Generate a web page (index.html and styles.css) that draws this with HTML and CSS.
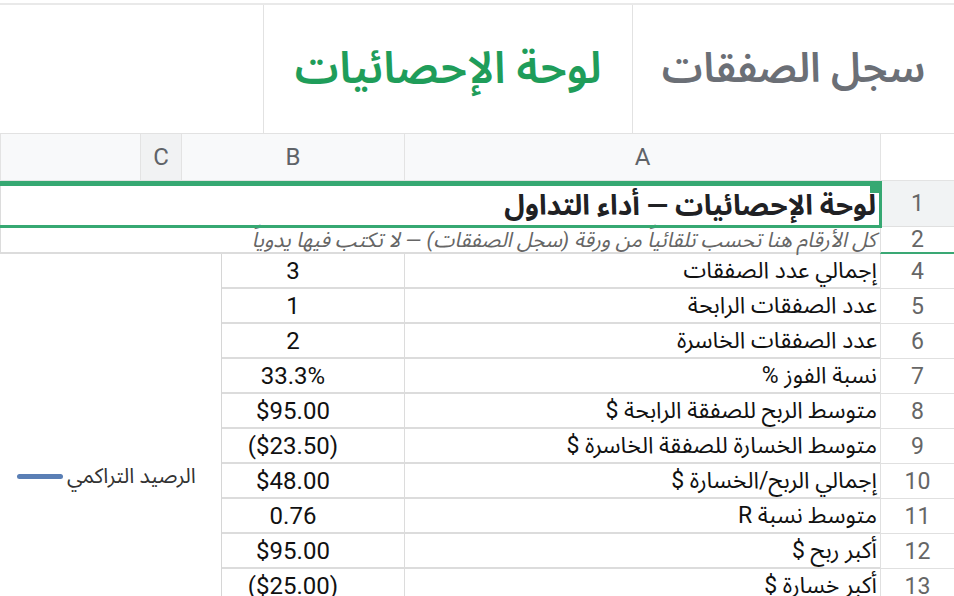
FILE: index.html
```html
<!DOCTYPE html>
<html lang="ar" dir="rtl">
<head>
  <meta charset="UTF-8">
  <title>لوحة الإحصائيات</title>
  <meta name="viewport" content="width=device-width, initial-scale=1.0" />
  <link rel="stylesheet" href="styles.css">
</head>
<body>
  <div class="tabs">
    <div class="tab">سجل الصفقات</div>
    <div class="tab active">لوحة الإحصائيات</div>
    <div class="tab-fill"></div>
  </div>

  <div class="sheet">
    <div class="grid">
      <div class="corner"></div>
      <div class="colhead">A</div>
      <div class="colhead">B</div>
      <div class="colhead col-c">C</div>
      <div class="colhead"></div>

      <div class="rownum row1 sel">1</div>
      <div class="cell title row1">لوحة الإحصائيات — أداء التداول</div>

      <div class="rownum row2 frozen">2</div>
      <div class="cell note row2">كل الأرقام هنا تحسب تلقائياً من ورقة (سجل الصفقات) — لا تكتب فيها يدوياً</div>

      <div class="rownum">4</div><div class="cell label">إجمالي عدد الصفقات</div><div class="cell value">3</div><div class="cell"></div><div class="cell"></div>
      <div class="rownum">5</div><div class="cell label">عدد الصفقات الرابحة</div><div class="cell value">1</div><div class="cell"></div><div class="cell"></div>
      <div class="rownum">6</div><div class="cell label">عدد الصفقات الخاسرة</div><div class="cell value">2</div><div class="cell"></div><div class="cell"></div>
      <div class="rownum">7</div><div class="cell label">نسبة الفوز %</div><div class="cell value">33.3%</div><div class="cell"></div><div class="cell"></div>
      <div class="rownum">8</div><div class="cell label">متوسط الربح للصفقة الرابحة $</div><div class="cell value">$95.00</div><div class="cell"></div><div class="cell"></div>
      <div class="rownum">9</div><div class="cell label">متوسط الخسارة للصفقة الخاسرة $</div><div class="cell value">($23.50)</div><div class="cell"></div><div class="cell"></div>
      <div class="rownum">10</div><div class="cell label">إجمالي الربح/الخسارة $</div><div class="cell value">$48.00</div><div class="cell"></div><div class="cell"></div>
      <div class="rownum">11</div><div class="cell label">متوسط نسبة R</div><div class="cell value">0.76</div><div class="cell"></div><div class="cell"></div>
      <div class="rownum">12</div><div class="cell label">أكبر ربح $</div><div class="cell value">$95.00</div><div class="cell"></div><div class="cell"></div>
      <div class="rownum">13</div><div class="cell label">أكبر خسارة $</div><div class="cell value">($25.00)</div><div class="cell"></div><div class="cell"></div>
    </div>

    <div class="selection"><span class="handle"></span></div>

    <div class="chart">
      <div class="legend">
        <span class="legend-text">الرصيد التراكمي</span>
        <span class="legend-line"></span>
      </div>
    </div>
  </div>
</body>
</html>
```

FILE: styles.css
```css
body {
  margin: 0;
  width: 954px;
  height: 596px;
  overflow: hidden;
  background: #fff;
  font-family: Roboto, "Noto Sans Arabic", "DejaVu Sans", sans-serif;
  color: #222;
}

.tabs {
  display: flex;
  margin-top: 3px;
  height: 128px;
  border-top: 2px solid #e9e9e9;
  border-bottom: 1px solid #e2e2e2;
}

.tab {
  display: flex;
  align-items: center;
  justify-content: center;
  font-size: 41px;
  font-weight: 600;
  color: #6b6f76;
  border-left: 1px solid #e2e2e2;
}

.tab:first-child {
  width: 321px;
}

.tab.active {
  width: 368px;
  font-size: 44px;
  color: #1f9d5a;
}

.tab-fill {
  flex: 1;
}

.sheet {
  position: relative;
}

.grid {
  display: grid;
  grid-template-columns: 74px 476px 223px 41px 1fr;
  grid-auto-rows: 35px;
  grid-template-rows: 47px 46px 27px;
}

.corner,
.colhead {
  background: #f8f9fa;
  border-left: 1px solid #e3e3e3;
  border-bottom: 1px solid #e3e3e3;
}

.corner {
  background: #fff;
}

.colhead {
  display: flex;
  align-items: center;
  justify-content: center;
  font-size: 24px;
  color: #5f6368;
}

.colhead.col-c {
  background: #f1f2f3;
}

.colhead:last-child {
  border-left: none;
  background: #fafafa;
}

.rownum {
  display: flex;
  align-items: center;
  justify-content: center;
  font-size: 23px;
  color: #666;
  background: #fff;
  border-left: 1px solid #e0e0e0;
  border-bottom: 1px solid #e0e0e0;
}

.rownum.sel {
  background: #f1f3f4;
}

.rownum.frozen {
  border-bottom: 2px solid #3aa874;
}

.cell {
  display: flex;
  align-items: center;
  border-left: 1px solid #dcdcdc;
  border-bottom: 2px solid #dcdcdc;
  white-space: nowrap;
  overflow: hidden;
}

.cell.title,
.cell.note {
  grid-column: 2 / -1;
  padding-right: 4px;
  overflow: visible;
}

.cell.title {
  font-size: 28px;
  font-weight: bold;
  color: #202124;
  padding-top: 6px;
}

.cell.note {
  font-size: 21px;
  font-style: italic;
  color: #666;
}

.cell.label {
  font-size: 23px;
  padding-right: 3px;
  color: #111;
}

.cell.value {
  justify-content: center;
  font-size: 24px;
  color: #111;
}

.selection {
  position: absolute;
  top: 47px;
  left: -4px;
  width: 880px;
  height: 39px;
  border: 3px solid #36a872;
  border-top-width: 5px;
}

.handle {
  position: absolute;
  top: -5px;
  right: -3px;
  width: 12px;
  height: 12px;
  background: #36a872;
}

.chart {
  position: absolute;
  top: 120px;
  left: 0;
  width: 221px;
  height: 400px;
  background: #fff;
  border-right: 1px solid #d6d6d6;
}

.legend {
  display: flex;
  align-items: center;
  gap: 4px;
  direction: ltr;
  margin: 200px 0 0 17px;
}

.legend-line {
  order: -1;
  width: 46px;
  height: 5px;
  border-radius: 3px;
  background: #5a7fb5;
}

.legend-text {
  font-size: 21px;
  color: #333;
}
```
